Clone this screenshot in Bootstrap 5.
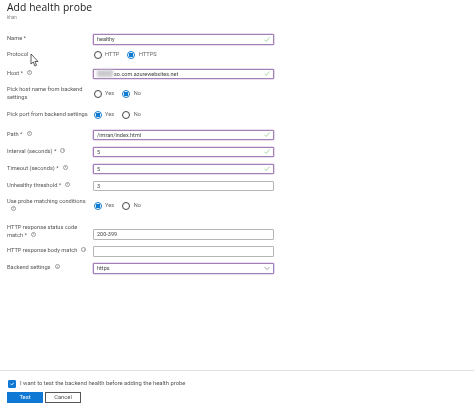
<!DOCTYPE html>
<html lang="en"><head><meta charset="utf-8"><title>Add health probe</title>
<link href="https://cdn.jsdelivr.net/npm/bootstrap@5.3.0/dist/css/bootstrap.min.css" rel="stylesheet">
<style>
html,body{width:474px;height:409px;overflow:hidden;background:#fff}
body{font-family:Roboto,"Liberation Sans",sans-serif;font-size:5.7px;color:#444;position:relative;line-height:7.8px}
.pg{height:409px;filter:blur(.3px)}
.ttl{font-family:"Open Sans",sans-serif;font-size:10.3px;line-height:12px;color:#222;margin:0;padding:1px 0 0 7px;font-weight:400;letter-spacing:.1px;height:13px}
.sub{font-size:4.6px;line-height:6px;color:#8a8a8a;padding:2px 0 0 7px;height:21px}
.frow{display:flex;align-items:center;padding-left:7px;width:274px}
.lbl{width:86px;flex:none;color:#555}
.h11{height:10.5px}.h10{height:10px}.h16{height:16px}.h18{height:18px}
.m5{margin-bottom:5px}.m6{margin-bottom:6.5px}.m8{margin-bottom:8px}.m9{margin-bottom:9px}.m10{margin-bottom:10px}
.tip{display:inline-block;width:5px;height:5px;border:.6px solid #999;border-radius:50%;margin-left:4px;vertical-align:0;background:linear-gradient(#999,#999) center/.6px 2.2px no-repeat}
.fld{flex:1;height:10.5px;min-height:0;border:1px solid #b5b5b5;border-radius:1px;padding:0 3px;font-size:5.5px;line-height:8px;color:#444;display:flex;align-items:center;justify-content:space-between;background:#fff}
.fld.act{border-color:#a57fb8;box-shadow:0 0 0 .3px #a57fb8}
.chk{width:6px;height:5px;flex:none}
.opts{display:flex;align-items:center;gap:3.5px}
.opts .form-check-input{width:8px;height:8px;margin:0 0 0 .5px;flex:none;border:.8px solid #444;background-image:none}
.opts .form-check-input:checked{border-color:#0f7bd0;background:radial-gradient(circle,#0f7bd0 0 2.2px,#fff 2.5px)}
.opts label{margin-right:4px;color:#666}
.blur{display:inline-block;width:16px;height:7px;background:#c9c9cf;filter:blur(1.5px);margin-right:1px}
.foot{position:absolute;left:0;right:0;top:370px;border-top:1px solid #e2e2e2;padding:8px 0 0 7px}
.foot .form-check-input{width:8px;height:8px;margin:0 0 0 1px;background-color:#0f78d4;border-color:#0f78d4;border-radius:1px}
.ck{display:flex;align-items:center;gap:4px;height:9px;color:#555;font-size:5.85px;margin-bottom:4px}
.btns{gap:2px}
.bt{width:36px;height:11px;padding:0;font-size:5.8px;line-height:9px;border-radius:0;--bs-btn-font-size:5.8px}
.bt1{background:#0f78d4;border:1px solid #0f78d4;color:#fff}
.bt2{background:#fff;border:1px solid #555;color:#555}
.cursor{position:absolute;left:30px;top:53px;width:9px;height:14px;filter:blur(.3px)}
</style></head><body>
<div class="pg">
<h1 class="ttl">Add health probe</h1>
<div class="sub">khan</div>

<div class="frow h11 m5"><span class="lbl">Name *</span><div class="fld act"><span>healthy</span><svg class="chk" viewBox="0 0 12 10"><path d="M1 5.5l3.5 3.5L11 1" fill="none" stroke="#8ac27d" stroke-width="1.4"/></svg></div></div>
<div class="frow h10 m9"><span class="lbl">Protocol</span><div class="opts"><input class="form-check-input" type="radio" name="p" aria-label="HTTP"><label>HTTP</label><input class="form-check-input" type="radio" name="p" checked aria-label="HTTPS"><label>HTTPS</label></div></div>
<div class="frow h11 m6"><span class="lbl">Host *<i class="tip"></i></span><div class="fld act"><span class="d-flex align-items-center"><i class="blur"></i>so.com.azurewebsites.net</span><svg class="chk" viewBox="0 0 12 10"><path d="M1 5.5l3.5 3.5L11 1" fill="none" stroke="#8ac27d" stroke-width="1.4"/></svg></div></div>
<div class="frow h16 m8"><span class="lbl">Pick host name from backend settings</span><div class="opts"><input class="form-check-input" type="radio" name="h" aria-label="Yes"><label>Yes</label><input class="form-check-input" type="radio" name="h" checked aria-label="No"><label>No</label></div></div>
<div class="frow h10 m10"><span class="lbl text-nowrap">Pick port from backend settings</span><div class="opts"><input class="form-check-input" type="radio" name="q" checked aria-label="Yes"><label>Yes</label><input class="form-check-input" type="radio" name="q" aria-label="No"><label>No</label></div></div>
<div class="frow h11 m6"><span class="lbl">Path *<i class="tip"></i></span><div class="fld act"><span>/imran/index.html</span><svg class="chk" viewBox="0 0 12 10"><path d="M1 5.5l3.5 3.5L11 1" fill="none" stroke="#8ac27d" stroke-width="1.4"/></svg></div></div>
<div class="frow h11 m6"><span class="lbl">Interval (seconds) *<i class="tip"></i></span><div class="fld act"><span>5</span><svg class="chk" viewBox="0 0 12 10"><path d="M1 5.5l3.5 3.5L11 1" fill="none" stroke="#8ac27d" stroke-width="1.4"/></svg></div></div>
<div class="frow h11 m6"><span class="lbl">Timeout (seconds) *<i class="tip"></i></span><div class="fld act"><span>5</span><svg class="chk" viewBox="0 0 12 10"><path d="M1 5.5l3.5 3.5L11 1" fill="none" stroke="#8ac27d" stroke-width="1.4"/></svg></div></div>
<div class="frow h11 m6"><span class="lbl">Unhealthy threshold *<i class="tip"></i></span><div class="fld"><span>3</span></div></div>
<div class="frow h16 m8"><span class="lbl">Use probe matching conditions<br><i class="tip ms-1"></i></span><div class="opts"><input class="form-check-input" type="radio" name="u" checked aria-label="Yes"><label>Yes</label><input class="form-check-input" type="radio" name="u" aria-label="No"><label>No</label></div></div>
<div class="frow h18 m6 align-items-end"><span class="lbl">HTTP response status code match *<i class="tip"></i></span><div class="fld"><span>200-399</span></div></div>
<div class="frow h11 m6"><span class="lbl">HTTP response body match<i class="tip"></i></span><div class="fld"></div></div>
<div class="frow h11"><span class="lbl">Backend settings<i class="tip"></i></span><div class="fld act"><span>https</span><svg class="chk" viewBox="0 0 12 8"><path d="M1 1l5 5 5-5" fill="none" stroke="#555" stroke-width="1.1"/></svg></div></div>

<div class="foot">
<div class="ck"><input class="form-check-input" type="checkbox" checked aria-label="test"><span>I want to test the backend health before adding the health probe</span></div>
<div class="d-flex btns"><button class="btn bt bt1" type="button">Test</button><button class="btn bt bt2" type="button">Cancel</button></div>
</div>
</div>
<svg class="cursor" viewBox="0 0 9 14"><path d="M1 1v10l2.3-2 1.6 4 1.6-.7-1.6-3.8H8z" fill="#fff" stroke="#333" stroke-width=".8"/></svg>
</body></html>
